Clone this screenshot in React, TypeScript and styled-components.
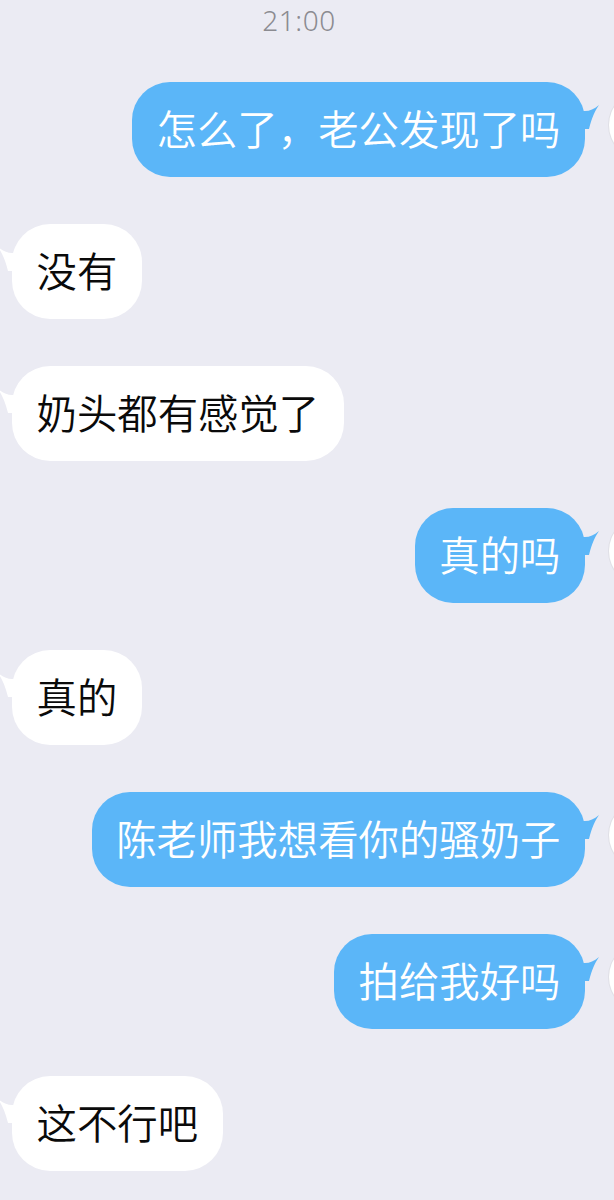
import React from "react";
import styled, { createGlobalStyle } from "styled-components";

type Msg = { id: number; mine: boolean; text: string };

const messages: Msg[] = [
  { id: 1, mine: true, text: "怎么了，老公发现了吗" },
  { id: 2, mine: false, text: "没有" },
  { id: 3, mine: false, text: "奶头都有感觉了" },
  { id: 4, mine: true, text: "真的吗" },
  { id: 5, mine: false, text: "真的" },
  { id: 6, mine: true, text: "陈老师我想看你的骚奶子" },
  { id: 7, mine: true, text: "拍给我好吗" },
  { id: 8, mine: false, text: "这不行吧" },
];

const Tail: React.FC<{ mine: boolean }> = ({ mine }) => (
  <TailSvg $mine={mine} width="24" height="26" viewBox="0 0 24 26">
    <path
      d="M0 6 L9 6 C14 6 18 4 23 0 C19 6 16 12 13 24 L0 24 Z"
      fill={mine ? "#5bb6f8" : "#ffffff"}
    />
  </TailSvg>
);

const App: React.FC = () => {
  return (
    <>
      <GlobalStyle />
      <Page>
        <Time>21:00</Time>
        <List>
          {messages.map((m) => (
            <Row key={m.id} $mine={m.mine}>
              {!m.mine && <Avatar />}
              <Bubble $mine={m.mine}>
                <Tail mine={m.mine} />
                {m.text}
              </Bubble>
              {m.mine && <Avatar />}
            </Row>
          ))}
        </List>
      </Page>
    </>
  );
};

const GlobalStyle = createGlobalStyle`
  html, body {
    margin: 0;
    padding: 0;
    background: #ebebf3;
  }
  body {
    font-family: "Noto Sans CJK SC", "Noto Sans", sans-serif;
  }
`;

const Page = styled.div`
  width: 614px;
  height: 1200px;
  overflow: hidden;
  background: #ebebf3;
`;

const Time = styled.div`
  height: 40px;
  line-height: 40px;
  text-align: center;
  font-family: "Noto Sans", "Liberation Sans", sans-serif;
  font-size: 28px;
  font-weight: 300;
  letter-spacing: 0.5px;
  color: #8b8b91;
  padding-right: 16px;
`;

const List = styled.div`
  display: flex;
  flex-direction: column;
  gap: 47px;
  margin-top: 42px;
`;

const Row = styled.div<{ $mine: boolean }>`
  display: flex;
  align-items: flex-start;
  gap: 24px;
  justify-content: ${(p) => (p.$mine ? "flex-end" : "flex-start")};
  margin-right: ${(p) => (p.$mine ? "-63px" : "0")};
  margin-left: ${(p) => (p.$mine ? "0" : "-80px")};
`;

const Avatar = styled.div`
  flex: none;
  width: 68px;
  height: 68px;
  margin-top: 9px;
  border-radius: 50%;
  background: #ffffff;
  box-shadow: 0 0 0 1px #e0e0e6;
`;

const Bubble = styled.div<{ $mine: boolean }>`
  position: relative;
  display: flex;
  align-items: center;
  box-sizing: border-box;
  height: 95px;
  padding: 0 24.5px 5px;
  border-radius: 38px;
  background: ${(p) => (p.$mine ? "#5bb6f8" : "#ffffff")};
  color: ${(p) => (p.$mine ? "#ffffff" : "#0a0a0a")};
  font-size: 40.4px;
  font-weight: 350;
  white-space: nowrap;
`;

const TailSvg = styled.svg<{ $mine: boolean }>`
  position: absolute;
  top: 23px;
  ${(p) =>
    p.$mine
      ? "right: -15px;"
      : "left: -15px; transform: scaleX(-1);"}
`;

export default App;
